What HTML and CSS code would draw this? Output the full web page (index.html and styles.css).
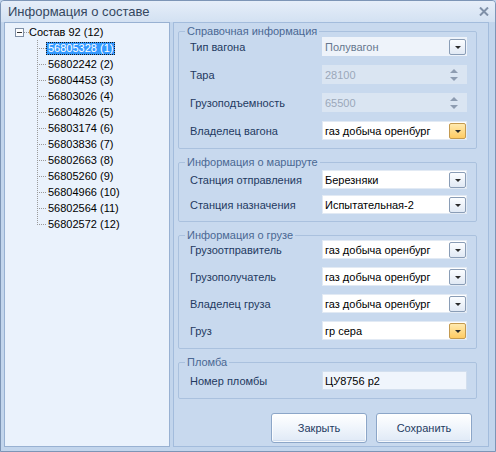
FILE: index.html
```html
<!DOCTYPE html>
<html lang="ru">
<head>
<meta charset="utf-8">
<title>Информация о составе</title>
<link rel="stylesheet" href="styles.css">
</head>
<body>
<div class="window">
  <div class="titlebar">
    <span class="title">Информация о составе</span>
    <svg class="close" width="10" height="9" viewBox="0 0 10 9">
      <path d="M1 0.5 L9 8.5 M9 0.5 L1 8.5" stroke="#7f90a8" stroke-width="2" fill="none"/>
    </svg>
  </div>
  <div class="body">
    <div class="tree">
      <div class="tree-root">
        <span class="expander"></span>
        <span class="stub"></span>
        <span class="root-label">Состав 92 (12)</span>
      </div>
      <ul class="tree-children">
        <li class="node"><span class="node-label selected">56805328 (1)</span></li>
        <li class="node"><span class="node-label">56802242 (2)</span></li>
        <li class="node"><span class="node-label">56804453 (3)</span></li>
        <li class="node"><span class="node-label">56803026 (4)</span></li>
        <li class="node"><span class="node-label">56804826 (5)</span></li>
        <li class="node"><span class="node-label">56803174 (6)</span></li>
        <li class="node"><span class="node-label">56803836 (7)</span></li>
        <li class="node"><span class="node-label">56802663 (8)</span></li>
        <li class="node"><span class="node-label">56805260 (9)</span></li>
        <li class="node"><span class="node-label">56804966 (10)</span></li>
        <li class="node"><span class="node-label">56802564 (11)</span></li>
        <li class="node"><span class="node-label">56802572 (12)</span></li>
      </ul>
    </div>
    <div class="panel">
      <fieldset class="group group-ref">
        <legend>Справочная информация</legend>
        <div class="row">
          <span class="lbl">Тип вагона</span>
          <div class="field field-readonly"><span class="val">Полувагон</span><span class="drop"></span></div>
        </div>
        <div class="row">
          <span class="lbl">Тара</span>
          <div class="field field-disabled"><span class="val">28100</span><span class="spin"><span class="up"></span><span class="down"></span></span></div>
        </div>
        <div class="row">
          <span class="lbl">Грузоподъемность</span>
          <div class="field field-disabled"><span class="val">65500</span><span class="spin"><span class="up"></span><span class="down"></span></span></div>
        </div>
        <div class="row">
          <span class="lbl">Владелец вагона</span>
          <div class="field"><span class="val">газ добыча оренбург</span><span class="drop drop-hot"></span></div>
        </div>
      </fieldset>

      <fieldset class="group group-route">
        <legend>Информация о маршруте</legend>
        <div class="row">
          <span class="lbl">Станция отправления</span>
          <div class="field"><span class="val">Березняки</span><span class="drop"></span></div>
        </div>
        <div class="row">
          <span class="lbl">Станция назначения</span>
          <div class="field"><span class="val">Испытательная-2</span><span class="drop"></span></div>
        </div>
      </fieldset>

      <fieldset class="group group-cargo">
        <legend>Информация о грузе</legend>
        <div class="row">
          <span class="lbl">Грузоотправитель</span>
          <div class="field"><span class="val">газ добыча оренбург</span><span class="drop"></span></div>
        </div>
        <div class="row">
          <span class="lbl">Грузополучатель</span>
          <div class="field"><span class="val">газ добыча оренбург</span><span class="drop"></span></div>
        </div>
        <div class="row">
          <span class="lbl">Владелец груза</span>
          <div class="field"><span class="val">газ добыча оренбург</span><span class="drop"></span></div>
        </div>
        <div class="row">
          <span class="lbl">Груз</span>
          <div class="field"><span class="val">гр сера</span><span class="drop drop-hot"></span></div>
        </div>
      </fieldset>

      <fieldset class="group group-seal">
        <legend>Пломба</legend>
        <div class="row">
          <span class="lbl">Номер пломбы</span>
          <div class="field field-text"><span class="val">ЦУ8756 p2</span></div>
        </div>
      </fieldset>

      <div class="buttons">
        <button class="dlg-btn" type="button">Закрыть</button>
        <button class="dlg-btn" type="button">Сохранить</button>
      </div>
    </div>
  </div>
</div>
</body>
</html>
```

FILE: styles.css
```css
html, body {
  margin: 0;
  padding: 0;
  background: #c2d5ec;
}

body {
  font-family: "Liberation Sans", Arial, sans-serif;
  font-size: 11px;
  color: #000;
}

.window {
  width: 496px;
  height: 452px;
  box-sizing: border-box;
  border: 1px solid #7d95b6;
  border-radius: 4px 4px 0 0;
  background: #c2d5ec;
  display: flex;
  flex-direction: column;
  overflow: hidden;
}

.titlebar {
  height: 21px;
  flex-shrink: 0;
  display: flex;
  align-items: center;
  justify-content: space-between;
  padding: 0 6px 0 7px;
  background: linear-gradient(#e6eef9, #d3e1f2);
}

.title {
  font-size: 13px;
  color: #34475f;
  line-height: 21px;
}

.close {
  display: block;
  margin-top: -1px;
}

.body {
  flex: 1;
  display: flex;
  padding: 0 6px 4px 3px;
  gap: 3px;
  min-height: 0;
}

/* ---------- tree ---------- */
.tree {
  width: 166px;
  box-sizing: border-box;
  border: 1px solid #98b1d2;
  background: #eaf2fc;
  padding-top: 1px;
}

.tree-root {
  height: 16px;
  display: flex;
  align-items: center;
  padding-left: 10px;
}

.expander {
  width: 9px;
  height: 9px;
  box-sizing: border-box;
  border: 1px solid #7e8ea4;
  background: linear-gradient(#333, #333) center / 5px 1px no-repeat, #fdfdfd;
  flex-shrink: 0;
}

.stub {
  width: 5px;
  height: 1px;
  background: repeating-linear-gradient(to right, #9a9a9a 0 1px, transparent 1px 2px);
  flex-shrink: 0;
}

.root-label {
  padding-left: 0;
  line-height: 16px;
}

.tree-children {
  list-style: none;
  margin: 0 0 0 32px;
  padding: 0;
}

.node {
  height: 16px;
  display: flex;
  align-items: center;
  padding-left: 9px;
  background:
    repeating-linear-gradient(to right, #9a9a9a 0 1px, transparent 1px 2px) 0 8px / 9px 1px no-repeat,
    repeating-linear-gradient(to bottom, #9a9a9a 0 1px, transparent 1px 2px) 0 0 / 1px 100% no-repeat;
}

.node:last-child {
  background:
    repeating-linear-gradient(to right, #9a9a9a 0 1px, transparent 1px 2px) 0 8px / 9px 1px no-repeat,
    repeating-linear-gradient(to bottom, #9a9a9a 0 1px, transparent 1px 2px) 0 0 / 1px 9px no-repeat;
}

.node-label {
  display: inline-block;
  line-height: 11px;
  padding: 0 1px;
  border: 1px dotted transparent;
}

.node-label.selected {
  background: #3399ff;
  color: #fff;
  border-color: #1b1b1b;
}

/* ---------- right panel ---------- */
.panel {
  flex: 1;
  box-sizing: border-box;
  border: 1px solid #a3bcdc;
  background: #c8d9ee;
  padding: 3px 11px 0 4px;
  display: flex;
  flex-direction: column;
}

.group {
  margin: 0;
  min-width: 0;
  border: 1px solid #aac1de;
  border-radius: 2px;
  padding: 0 9px 8px 11px;
  display: flex;
  flex-direction: column;
}

.group + .group {
  margin-top: 8px;
}

.group legend {
  font-size: 11px;
  line-height: 10px;
  color: #4a6893;
  padding: 0 2px;
  margin-left: -5px;
}

.group-ref {
  padding-top: 1px;
  gap: 9px;
}

.group-route {
  padding-top: 3px;
  padding-bottom: 7px;
  gap: 6px;
}

.group-cargo {
  padding-top: 0;
  padding-bottom: 8px;
  gap: 8px;
}

.group-seal {
  padding-top: 4px;
  padding-bottom: 8px;
}

.row {
  display: flex;
  align-items: center;
  height: 19px;
}

.lbl {
  width: 132px;
  flex-shrink: 0;
  color: #1f3a61;
  white-space: nowrap;
}

.field {
  width: 145px;
  height: 19px;
  box-sizing: border-box;
  border: 1px solid #e2eaf4;
  background: #ffffff;
  display: flex;
  align-items: center;
  padding-left: 2px;
}

.val {
  white-space: nowrap;
  flex: 1;
  overflow: hidden;
}

.field-readonly {
  background: #eef3fa;
  border-color: #eef3fa;
  color: #66778e;
}

.field-disabled {
  background: #dae5f2;
  border-color: #dae5f2;
  color: #9aa8ba;
}

.field-text {
  background: #f0f5fc;
  border-color: #d3dfee;
}

.drop {
  width: 17px;
  height: 16px;
  box-sizing: border-box;
  margin-right: 0;
  flex-shrink: 0;
  border: 1px solid #8a9db6;
  border-radius: 2px;
  background: linear-gradient(#fbfdff, #e1e9f4);
  display: flex;
  align-items: center;
  justify-content: center;
}

.drop::after {
  content: "";
  width: 0;
  height: 0;
  border-left: 3px solid transparent;
  border-right: 3px solid transparent;
  border-top: 3px solid #2b2b2b;
  margin-top: 1px;
}

.drop-hot {
  border-color: #c49a4f;
  background: linear-gradient(#ffeab0, #ffcb62);
}

.spin {
  display: flex;
  flex-direction: column;
  gap: 4px;
  margin-right: 8px;
  flex-shrink: 0;
}

.spin .up,
.spin .down {
  display: block;
  width: 0;
  height: 0;
  border-left: 4px solid transparent;
  border-right: 4px solid transparent;
}

.spin .up {
  border-bottom: 4px solid #8d9cb1;
}

.spin .down {
  border-top: 4px solid #8d9cb1;
}

/* ---------- buttons ---------- */
.buttons {
  margin-top: 14px;
  display: flex;
  justify-content: flex-end;
  gap: 9px;
  padding-right: 5px;
}

.dlg-btn {
  width: 96px;
  height: 30px;
  box-sizing: border-box;
  border: 1px solid #8ca6c8;
  border-radius: 3px;
  background: linear-gradient(#ffffff 0%, #f1f6fc 45%, #dfe9f6 100%);
  box-shadow: inset 0 0 0 1px rgba(255, 255, 255, 0.8), inset 0 -2px 0 #cddbee;
  font-family: "Liberation Sans", Arial, sans-serif;
  font-size: 11px;
  color: #1f3b62;
  padding: 0;
}
```
